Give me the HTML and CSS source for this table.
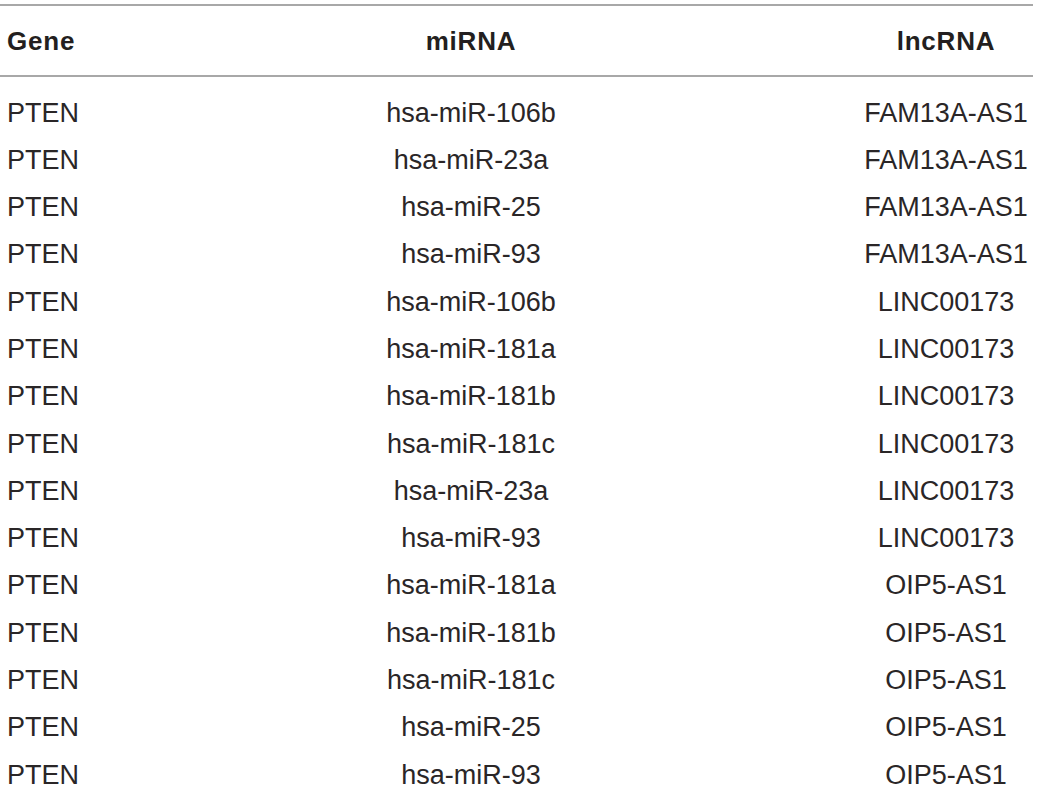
FILE: index.html
```html
<!DOCTYPE html>
<html>
<head>
<meta charset="utf-8">
<link rel="stylesheet" href="styles.css">
</head>
<body>
<table class="data">
  <colgroup>
    <col class="c-gene">
    <col class="c-mirna">
    <col class="c-lnc">
  </colgroup>
  <thead>
    <tr><th class="left">Gene</th><th>miRNA</th><th>lncRNA</th></tr>
  </thead>
  <tbody>
    <tr class="first"><td class="left">PTEN</td><td>hsa-miR-106b</td><td>FAM13A-AS1</td></tr>
    <tr><td class="left">PTEN</td><td>hsa-miR-23a</td><td>FAM13A-AS1</td></tr>
    <tr><td class="left">PTEN</td><td>hsa-miR-25</td><td>FAM13A-AS1</td></tr>
    <tr><td class="left">PTEN</td><td>hsa-miR-93</td><td>FAM13A-AS1</td></tr>
    <tr><td class="left">PTEN</td><td>hsa-miR-106b</td><td>LINC00173</td></tr>
    <tr><td class="left">PTEN</td><td>hsa-miR-181a</td><td>LINC00173</td></tr>
    <tr><td class="left">PTEN</td><td>hsa-miR-181b</td><td>LINC00173</td></tr>
    <tr><td class="left">PTEN</td><td>hsa-miR-181c</td><td>LINC00173</td></tr>
    <tr><td class="left">PTEN</td><td>hsa-miR-23a</td><td>LINC00173</td></tr>
    <tr><td class="left">PTEN</td><td>hsa-miR-93</td><td>LINC00173</td></tr>
    <tr><td class="left">PTEN</td><td>hsa-miR-181a</td><td>OIP5-AS1</td></tr>
    <tr><td class="left">PTEN</td><td>hsa-miR-181b</td><td>OIP5-AS1</td></tr>
    <tr><td class="left">PTEN</td><td>hsa-miR-181c</td><td>OIP5-AS1</td></tr>
    <tr><td class="left">PTEN</td><td>hsa-miR-25</td><td>OIP5-AS1</td></tr>
    <tr><td class="left">PTEN</td><td>hsa-miR-93</td><td>OIP5-AS1</td></tr>
  </tbody>
</table>
</body>
</html>
```
FILE: styles.css
```css
html, body {
  margin: 0;
  padding: 0;
  background: #ffffff;
}
body {
  padding-top: 4px;
  font-family: "Liberation Sans", Arial, sans-serif;
  color: #231f20;
}
.data {
  width: 1033px;
  border-collapse: collapse;
  table-layout: fixed;
}
.c-gene { width: 83px; }
.c-mirna { width: 776px; }
.c-lnc { width: 174px; }
.data thead th {
  border-top: 2px solid #a8a8a8;
  border-bottom: 2px solid #a8a8a8;
  height: 69px;
  padding: 0;
  font-size: 26px;
  letter-spacing: 0.8px;
  font-weight: 700;
  text-align: center;
  vertical-align: middle;
  line-height: 1;
}
.data td {
  padding: 0;
  font-size: 27px;
  line-height: 47.3px;
  text-align: center;
  white-space: nowrap;
  color: #2a2627;
}
.data .left {
  text-align: left;
  padding-left: 7px;
}
.data tr.first td {
  padding-top: 12.5px;
}
```
